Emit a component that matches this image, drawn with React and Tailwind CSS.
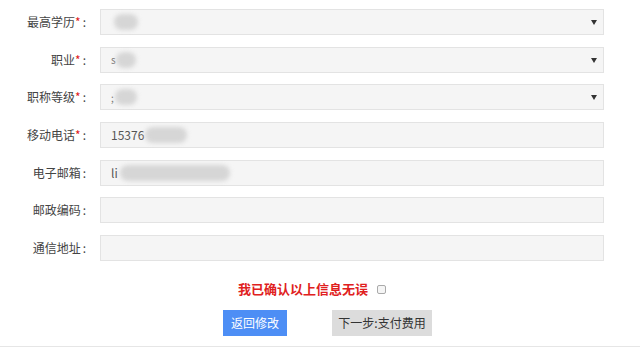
import React from "react";

const font = { fontFamily: '"Noto Sans CJK SC", "Noto Sans", sans-serif' };

function Label({ text, req }) {
  return (
    <div className="w-[100px] shrink-0 pr-[14px] text-right text-[12px] text-[#444]">
      {text}
      {req && <span className="text-[#e02020]">*</span>}
      <span className="ml-[2px]">:</span>
    </div>
  );
}

function Blob({ w, className = "" }) {
  return <span className={"inline-block h-[16px] rounded-full bg-[#d6d6d6] blur-[2px] " + className} style={{ width: w }} />;
}

function Field({ select, children }) {
  return (
    <div className="relative flex h-[26px] w-[504px] items-center border border-[#e3e3e3] bg-[#f5f5f5] px-[10px] text-[12px] text-[#555]">
      {children}
      {select && (
        <span className="absolute right-[6px] top-[10px] h-0 w-0 border-x-[3px] border-t-[5px] border-x-transparent border-t-[#333]" />
      )}
    </div>
  );
}

function Row({ label, req, select, children }) {
  return (
    <div className="flex items-center">
      <Label text={label} req={req} />
      <Field select={select}>{children}</Field>
    </div>
  );
}

export default function App() {
  return (
    <div className="h-[361px] w-[640px] bg-white" style={font}>
      <div className="flex flex-col gap-[11.7px] pt-[9px]">
        <Row label="最高学历" req select>
          <Blob w={24} className="ml-[3px]" />
        </Row>
        <Row label="职业" req select>
          <span className="text-[10px] text-[#777]">s</span>
          <Blob w={20} />
        </Row>
        <Row label="职称等级" req select>
          <span className="text-[10px] text-[#777]">;</span>
          <Blob w={22} className="ml-[1px]" />
        </Row>
        <Row label="移动电话" req>
          <span>15376</span>
          <Blob w={42} className="ml-[1px]" />
        </Row>
        <Row label="电子邮箱">
          <span>li</span>
          <Blob w={110} className="ml-[2px]" />
        </Row>
        <Row label="邮政编码" />
        <Row label="通信地址" />
      </div>
      <div className="mt-[19px] flex items-center pl-[238px]">
        <span className="text-[13px] leading-[18px] font-bold text-[#e02020]">我已确认以上信息无误</span>
        <span className="ml-[9px] inline-block h-[9px] w-[9px] rounded-[2px] border border-[#aaa] bg-[#f5f5f5]" />
      </div>
      <div className="mt-[12px] flex gap-[45px] pl-[223px]">
        <button className="h-[26px] w-[64px] bg-[#4d8ef5] text-[12px] text-white">返回修改</button>
        <button className="h-[26px] w-[100px] bg-[#dcdcdc] text-[12px] text-[#333]">下一步:支付费用</button>
      </div>
      <div className="mt-[10px] h-px w-full bg-[#e6e6e6]" />
    </div>
  );
}
